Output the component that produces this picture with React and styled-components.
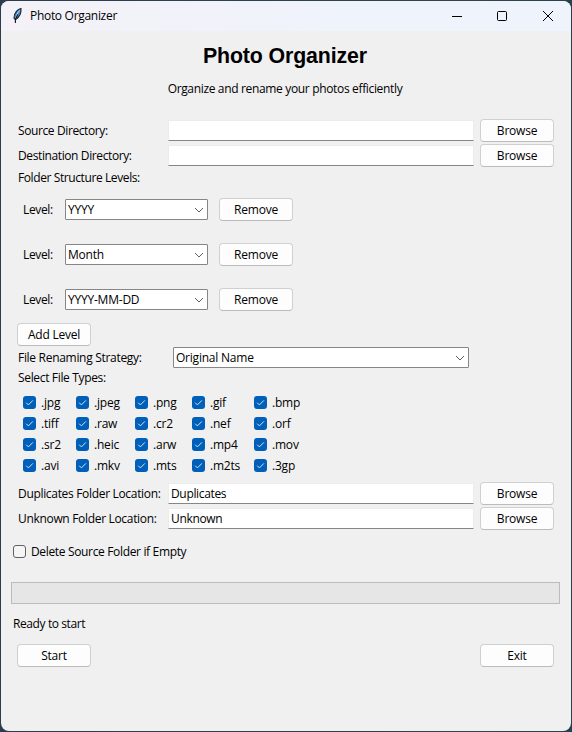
import React from "react";
import styled, { createGlobalStyle } from "styled-components";

const GlobalStyle = createGlobalStyle`
  * { box-sizing: border-box; }
  body { margin: 0; background: #263b49; }
`;

const Desktop = styled.div`
  width: 572px;
  height: 732px;
  padding: 1px;
  background: linear-gradient(90deg, #2b3c4c, #33434f 85%, #26424b);
  font: 12px/16px "Open Sans", "Noto Sans", sans-serif;
  color: #000;
`;

const AppWindow = styled.div`
  width: 570px;
  height: 730px;
  border-radius: 8px;
  overflow: hidden;
  background: #f0f0f0;
  display: flex;
  flex-direction: column;
`;

const TitleBar = styled.header`
  height: 30px;
  flex: none;
  display: flex;
  align-items: center;
  padding-left: 9px;
  background: linear-gradient(90deg, #f4f1f8, #eff3fb 60%);
`;

const TitleText = styled.span`
  flex: 1;
  margin-left: 6px;
`;

const Caption = styled.span`
  width: 46px;
  height: 30px;
  display: flex;
  align-items: center;
  justify-content: center;
`;

const Body = styled.main`
  flex: 1;
  display: flex;
  flex-direction: column;
`;

const Text = styled.span`
  white-space: nowrap;
  letter-spacing: ${(p) => p.$spacing ?? -0.34}px;
`;

const Heading = styled.h1`
  margin: 12px 2px 0 0;
  height: 24px;
  text-align: center;
  font: bold 21.33px/26px "Liberation Sans", Arial, sans-serif;
  letter-spacing: -0.12px;
`;

const Subtitle = styled.p`
  margin: 14px 2px 22px 0;
  height: 16px;
  text-align: center;
`;

const FormRow = styled.div`
  height: 23px;
  margin-bottom: 2px;
  padding-left: 17px;
  display: grid;
  grid-template-columns: 150px 312px 74px;
  align-items: center;
`;

const Field = styled.div`
  height: 21px;
  width: 306px;
  padding: 2px 2px 0;
  background: #fff;
  border: 1px solid #ececec;
  border-bottom-color: #868686;
`;

const Button = styled.button`
  width: 74px;
  height: 23px;
  flex: none;
  padding: 1px 0 0;
  border: 1px solid #d0d0d0;
  border-bottom-color: #bbb;
  border-radius: 4px;
  background: #fdfdfd;
  font: inherit;
  color: #000;
`;

const SectionLabel = styled.div`
  height: 16px;
  padding-left: 17px;
  margin-top: 1px;
`;

const LevelList = styled.div`
  display: flex;
  flex-direction: column;
  gap: 22px;
  margin: 12px 0 12px 22px;
`;

const LevelRow = styled.div`
  height: 23px;
  display: grid;
  grid-template-columns: 42px 154px 74px;
  align-items: center;
`;

const ComboBox = styled.div`
  width: ${(p) => p.$width}px;
  height: 21px;
  display: flex;
  align-items: center;
  justify-content: space-between;
  padding: 0 3px 0 2px;
  border: 1px solid #868686;
  border-radius: 1px;
  background: #fff;
`;

const AddRow = styled.div`
  height: 23px;
  padding-left: 16px;
  display: flex;
`;

const StrategyRow = styled.div`
  height: 23px;
  padding-left: 17px;
  display: grid;
  grid-template-columns: 155px 296px;
  align-items: center;
`;

const TypeGrid = styled.div`
  display: grid;
  grid-template-columns: 53px 59px 57px 62px 60px;
  grid-auto-rows: 21px;
  margin: 6px 0 6px 22px;
`;

const CheckRow = styled.label`
  display: flex;
  align-items: center;
  gap: 5px;
`;

const Box = styled.span`
  width: 13px;
  height: 13px;
  flex: none;
  display: flex;
  border-radius: 3px;
  background: ${(p) => (p.$checked ? "#005fb8" : "#f5f5f5")};
  border: ${(p) => (p.$checked ? "none" : "1px solid #626262")};
`;

const DeleteRow = styled.div`
  height: 15px;
  margin: 12px 0 0 12px;
  display: flex;
`;

const Progress = styled.div`
  width: 549px;
  height: 22px;
  margin: 23px 0 12px 10px;
  border: 1px solid #bcbcbc;
  background: #e6e6e6;
`;

const Status = styled.div`
  height: 16px;
  padding-left: 12px;
`;

const Footer = styled.footer`
  display: flex;
  justify-content: space-between;
  padding: 12px 17px 0 16px;
`;

const Feather = () => (
  <svg width="14" height="18" viewBox="0 0 14 18">
    <path d="M11 1.5C8 1.8 4 5.5 4 11L5.4 12.7C9 10.5 11.4 6.5 11 1.5Z" fill="#4c86c4" stroke="#17212d" strokeWidth="1.1" />
    <path d="M9.6 3.3C7.3 6.3 6.1 9 5.5 12" fill="none" stroke="#b5dcff" strokeWidth="0.9" />
    <path d="M7.8 7.5L5.4 12.3L5.4 16" fill="none" stroke="#111" strokeWidth="1.1" />
  </svg>
);

const Chevron = () => (
  <svg width="10" height="10" viewBox="0 0 10 10" fill="none" stroke="#606060">
    <path d="M1 3L5 7L9 3" />
  </svg>
);

const Check = () => (
  <svg width="13" height="13" viewBox="0 0 13 13" fill="none" stroke="#d5e5f5">
    <path d="M3.2 6.7L5.4 8.9L9.9 4.4" />
  </svg>
);

function Combo({ value, width }) {
  return (
    <ComboBox $width={width}>
      <Text $spacing={-0.22}>{value}</Text>
      <Chevron />
    </ComboBox>
  );
}

function PushButton({ children }) {
  return (
    <Button>
      <Text $spacing={-0.22}>{children}</Text>
    </Button>
  );
}

function PathRow({ label, value }) {
  return (
    <FormRow>
      <Text $spacing={value ? -0.32 : -0.39}>{label}</Text>
      <Field><Text>{value}</Text></Field>
      <PushButton>Browse</PushButton>
    </FormRow>
  );
}

const levels = ["YYYY", "Month", "YYYY-MM-DD"];
const types = [
  ".jpg", ".jpeg", ".png", ".gif", ".bmp",
  ".tiff", ".raw", ".cr2", ".nef", ".orf",
  ".sr2", ".heic", ".arw", ".mp4", ".mov",
  ".avi", ".mkv", ".mts", ".m2ts", ".3gp",
];

export default function App() {
  return (
    <Desktop>
      <GlobalStyle />
      <AppWindow>
        <TitleBar>
          <Feather />
          <TitleText><Text $spacing={-0.3}>Photo Organizer</Text></TitleText>
          <Caption>
            <svg width="12" height="10" stroke="#000"><path d="M2 5.5H12" /></svg>
          </Caption>
          <Caption>
            <svg width="10" height="10" fill="none" stroke="#000"><rect x="0.5" y="0.5" width="9" height="9" rx="1" /></svg>
          </Caption>
          <Caption>
            <svg width="10" height="10" stroke="#000"><path d="M0 0L10 10M10 0L0 10" /></svg>
          </Caption>
        </TitleBar>
        <Body>
          <Heading>Photo Organizer</Heading>
          <Subtitle><Text>Organize and rename your photos efficiently</Text></Subtitle>
          <PathRow label="Source Directory:" />
          <PathRow label="Destination Directory:" />
          <SectionLabel><Text $spacing={-0.4}>Folder Structure Levels:</Text></SectionLabel>
          <LevelList>
            {levels.map((level) => (
              <LevelRow key={level}>
                <Text>Level:</Text>
                <Combo value={level} width={143} />
                <PushButton>Remove</PushButton>
              </LevelRow>
            ))}
          </LevelList>
          <AddRow><PushButton>Add Level</PushButton></AddRow>
          <StrategyRow>
            <Text $spacing={-0.3}>File Renaming Strategy:</Text>
            <Combo value="Original Name" width={296} />
          </StrategyRow>
          <SectionLabel><Text>Select File Types:</Text></SectionLabel>
          <TypeGrid>
            {types.map((type) => (
              <CheckRow key={type}>
                <Box $checked><Check /></Box>
                <Text $spacing={-0.2}>{type}</Text>
              </CheckRow>
            ))}
          </TypeGrid>
          <PathRow label="Duplicates Folder Location:" value="Duplicates" />
          <PathRow label="Unknown Folder Location:" value="Unknown" />
          <DeleteRow>
            <CheckRow>
              <Box />
              <Text>Delete Source Folder if Empty</Text>
            </CheckRow>
          </DeleteRow>
          <Progress />
          <Status><Text $spacing={-0.4}>Ready to start</Text></Status>
          <Footer>
            <PushButton>Start</PushButton>
            <PushButton>Exit</PushButton>
          </Footer>
        </Body>
      </AppWindow>
    </Desktop>
  );
}
